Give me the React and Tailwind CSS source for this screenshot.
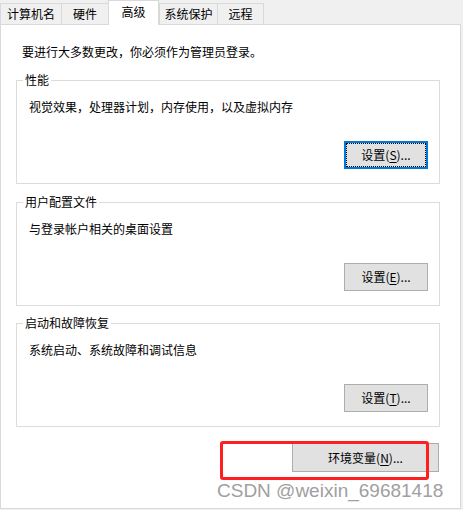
import React from 'react';

const TABS = [
  { label: '计算机名', width: 'w-[61px]', edge: 'border-l' },
  { label: '硬件', width: 'w-[47px]', edge: 'border-l' },
  { label: '高级', width: 'w-[51px]', edge: 'border-l border-r', active: true },
  { label: '系统保护', width: 'w-[58px]', edge: 'border-l' },
  { label: '远程', width: 'w-[47px]', edge: 'border-l border-r' },
];

const GROUPS = [
  { title: '性能', text: '视觉效果，处理器计划，内存使用，以及虚拟内存', key: 'S', focused: true, gap: 'mt-[12px]' },
  { title: '用户配置文件', text: '与登录帐户相关的桌面设置', key: 'E', gap: 'mt-[10px]' },
  { title: '启动和故障恢复', text: '系统启动、系统故障和调试信息', key: 'T', gap: 'mt-[9px]' },
];

function SettingsButton({ hotkey, focused }) {
  const look = focused
    ? 'border-2 border-[#0078d7] outline outline-1 outline-dotted outline-black outline-offset-[-3px]'
    : 'border border-[#adadad]';
  return (
    <button
      type="button"
      className={`flex h-[28px] w-[84px] items-center justify-center bg-[#e1e1e1] text-[12px] leading-[16px] text-black ${look}`}
    >
      设置(<span className="underline underline-offset-2">{hotkey}</span>)...
    </button>
  );
}

function GroupBox({ group }) {
  return (
    <fieldset className={`ml-[15px] w-[424px] border border-[#dcdcdc] p-0 ${group.gap}`}>
      <legend className="ml-[6px] px-[2px] text-[12px] leading-[16px] text-black">{group.title}</legend>
      <div className="flex flex-col pb-[14px] pl-[12px] pr-[11px] pt-[11px]">
        <p className="text-[12px] leading-[16px] text-black">{group.text}</p>
        <div className="mt-[26px] flex justify-end">
          <SettingsButton hotkey={group.key} focused={group.focused} />
        </div>
      </div>
    </fieldset>
  );
}

export default function App() {
  return (
    <div className="relative h-[510px] w-[463px] overflow-hidden bg-[#f0f0f0] [font-family:'Noto_Sans_CJK_SC','Noto_Sans',sans-serif]">
      <div className="flex h-[24px] items-end">
        {TABS.map((tab) =>
          tab.active ? (
            <div
              key={tab.label}
              className={`relative z-10 -mb-px flex h-[25px] items-start justify-center border-t border-[#d9d9d9] bg-white pt-[3px] text-[12px] leading-[16px] text-black ${tab.width} ${tab.edge}`}
            >
              {tab.label}
            </div>
          ) : (
            <div
              key={tab.label}
              className={`flex h-[21px] items-start justify-center border-t border-[#d9d9d9] bg-[#f0f0f0] pt-[2px] text-[12px] leading-[16px] text-black ${tab.width} ${tab.edge}`}
            >
              {tab.label}
            </div>
          )
        )}
      </div>

      <div className="flex h-[485px] w-[461px] flex-col border border-[#d9d9d9] bg-white">
        <p className="pl-[21px] pt-[19px] text-[12px] leading-[16px] text-black">
          要进行大多数更改，你必须作为管理员登录。
        </p>
        {GROUPS.map((group) => (
          <GroupBox key={group.title} group={group} />
        ))}
        <div className="mr-[21px] mt-[16px] flex justify-end">
          <button
            type="button"
            className="flex h-[29px] w-[147px] items-center justify-center border border-[#adadad] bg-[#e1e1e1] text-[12px] leading-[16px] text-black"
          >
            环境变量(<span className="underline underline-offset-2">N</span>)...
          </button>
        </div>
      </div>

      {/* annotation + watermark sit on top of the dialog */}
      <div className="absolute left-[220px] top-[441px] h-[39px] w-[209px] rounded-[3px] border-[3px] border-[#ff1f1f]" />
      <div className="absolute left-[217px] top-[480px] whitespace-nowrap text-[19px] leading-[22px] text-[#a0a0a0] [font-family:'Liberation_Sans',Arial,sans-serif]">
        CSDN @weixin_69681418
      </div>
    </div>
  );
}
